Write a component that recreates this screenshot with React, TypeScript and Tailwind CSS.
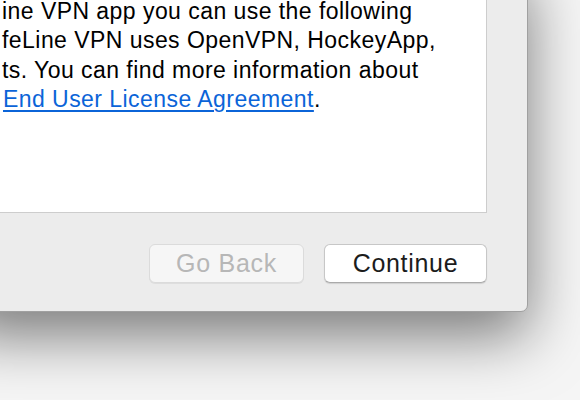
import React from "react";

export default function App() {
  const font = { fontFamily: '"Liberation Sans", Arial, Helvetica, sans-serif' };
  return (
    <div
      className="relative w-[580px] h-[400px] overflow-hidden bg-[#f5f5f5]"
      style={font}
    >
      <div className="-ml-[40px] -mt-[40px] w-[568px] h-[352px] flex flex-col bg-[#ececec] rounded-br-[7px] border border-[#a0a0a0] shadow-[0_24px_60px_rgba(0,0,0,0.5)]">
        <div className="mr-[40px] h-[252px] bg-white border border-[#cdcdcd] pl-[40px] pt-[38px] overflow-hidden">
          <div className="text-[23px] leading-[29.5px] text-black whitespace-nowrap tracking-[0.45px]">
            <div className="leading-[23px]">ine VPN app you can use the following</div>
            <div className="mt-[3.3px]">feLine VPN uses OpenVPN, HockeyApp,</div>
            <div>ts. You can find more information about</div>
            <div className="pl-[1px]">
              <span className="text-[#0b64d8] underline underline-offset-[3px] decoration-[1.5px]">
                End User License Agreement
              </span>
              .
            </div>
          </div>
        </div>
        <div className="mt-[31px] mr-[40px] flex justify-end gap-[20px]">
          <button className="w-[155px] h-[39px] rounded-[6px] bg-[#f6f6f6] border border-[#dbdbdb] text-[25px] text-[#b7b7b7] tracking-[0.7px] shadow-[0_1px_0_rgba(0,0,0,0.06)]">
            Go Back
          </button>
          <button className="w-[163px] h-[39px] rounded-[6px] bg-white border border-[#c7c7c7] border-b-[#aaaaaa] text-[25px] text-[#1c1c1c] tracking-[0.7px] shadow-[0_1px_1px_rgba(0,0,0,0.12)]">
            Continue
          </button>
        </div>
      </div>
    </div>
  );
}
